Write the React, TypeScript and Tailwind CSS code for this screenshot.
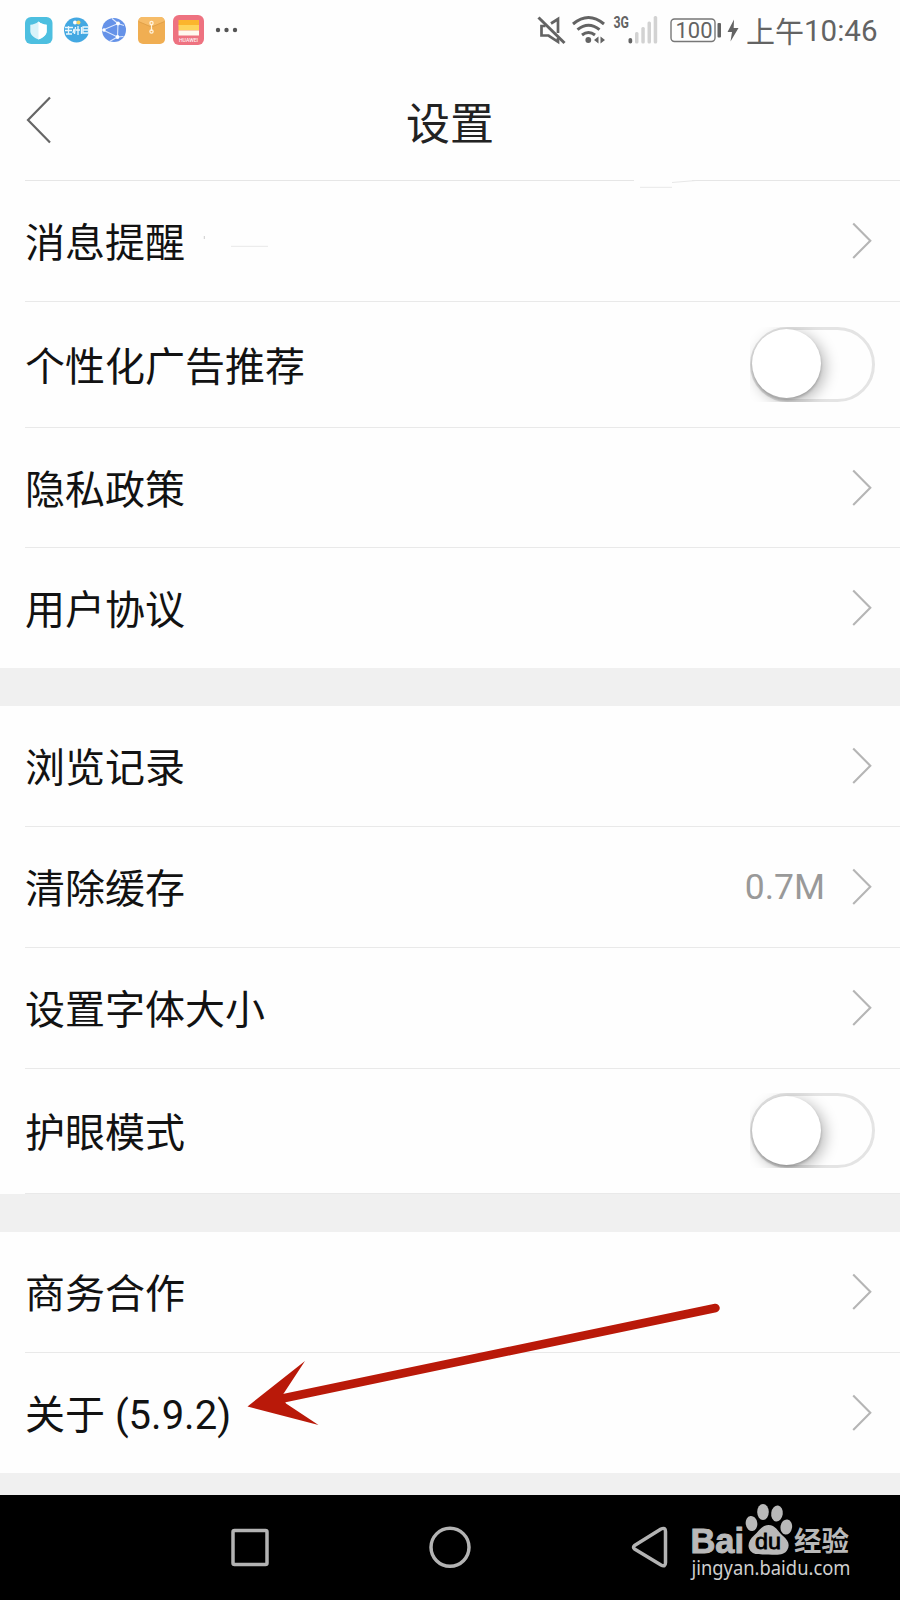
import type { ReactNode } from "react";

function Chevron() {
  return (
    <svg className="h-10 w-5 shrink-0" viewBox="0 0 20 40" fill="none" stroke="#b5b5b5" strokeWidth="2.100">
      <path d="M1.2 2.6 18.3 19.700 1.2 36.900" />
    </svg>
  );
}

function Toggle() {
  return (
    <div className="relative mb-[1px] h-[75px] w-[125px] overflow-hidden">
      <div className="h-[75px] w-[125px] rounded-full border-[3px] border-[#e4e4e4] bg-[#fefefe]" />
      <div className="absolute left-[2px] top-[2.500px] h-[69px] w-[69px] rounded-full bg-white shadow-[4px_4px_14px_1px_rgba(0,0,0,0.25),0_2px_3px_rgba(0,0,0,0.22)]" />
    </div>
  );
}

type RowProps = { label: string; value?: string; toggle?: boolean; size: string; line?: boolean };

function Row({ label, value, toggle, size, line = true }: RowProps) {
  return (
    <div className={`${size} pl-[25px]`}>
      <div className={`flex h-full items-center justify-between ${line ? "border-b border-[#e9e9e9]" : ""}`}>
        <span className="whitespace-pre pt-[6px] text-[40px] leading-[60px] text-[#121212]">{label}</span>
        {toggle ? (
          <div className="mr-[25px]"><Toggle /></div>
        ) : (
          <div className="mr-[28px] flex items-center gap-[27px]">
            {value && <span className="pt-[2px] text-[35.500px] leading-none text-[#999]">{value}</span>}
            <Chevron />
          </div>
        )}
      </div>
    </div>
  );
}

function Group({ children }: { children: ReactNode }) {
  return <section className="bg-[#fefefe]">{children}</section>;
}

function AppIcons() {
  return (
    <svg className="h-[60px] w-[260px]" viewBox="0 0 260 60">
      <rect x="25" y="17" width="27.5" height="27" rx="6" fill="#4dbfe0" />
      <path d="M38.500 21.500c2.500 2.200 5 3 8.200 3.200v6.500c0 3.700-3.500 6.400-8.200 8.300-4.700-1.900-8.200-4.600-8.200-8.300v-6.500c3.200-.2 5.700-1 8.200-3.200z" fill="#d9f3fa" />
      <path d="M38.500 21.500c2.500 2.200 5 3 8.200 3.200v6.500c0 3.700-3.500 6.400-8.200 8.300z" fill="#fff" />
      <circle cx="76.500" cy="30" r="12.500" fill="#43a8e2" />
      <circle cx="75" cy="22.500" r="2" fill="#fff" />
      <circle cx="78.500" cy="22.500" r="2" fill="#f3d465" />
      <path d="M65 27.500h8M65 30.500h7M66 34h6M68.500 26v8M74 29l-1 4M75.500 27l-1 7M78 26v9M76 30h4M81.500 27v7M83 27h5.500v6H83zM83 30h5.500" stroke="#eaf6fc" strokeWidth="1.300" fill="none" />
      <circle cx="114" cy="30" r="12" fill="#6592e8" />
      <path d="M103 30 118 23.500 117.500 37z M118 23.500 112 18.500M118 23.500l6 2M117.500 37l-8 4.500M117.500 37l6-.5" stroke="#dce8fd" strokeWidth="1.100" fill="none" />
      <circle cx="104" cy="30" r="1.700" fill="#fff" /><circle cx="118" cy="23.500" r="1.900" fill="#fff" /><circle cx="117.500" cy="37" r="1.900" fill="#fff" />
      <rect x="138" y="17" width="27" height="27" rx="5" fill="#f0ae52" />
      <path d="M138.500 21.500 151.500 27 164.500 21.500V20q-1-3-4-3h-18q-3 0-4 3z" fill="#f6bc68" />
      <path d="M138.500 21.500 151.500 27 164.500 21.500" stroke="#d99840" strokeWidth=".7" fill="none" />
      <path d="M151.500 24v7" stroke="#fff3de" strokeWidth="1.200" />
      <circle cx="151.500" cy="23" r="1.600" fill="none" stroke="#fff3de" strokeWidth="1.300" />
      <circle cx="151.500" cy="31.500" r="1.600" fill="none" stroke="#fff3de" strokeWidth="1.300" />
      <rect x="173" y="15" width="31" height="30" rx="6" fill="#ee7280" />
      <rect x="178.500" y="20" width="20.500" height="6" fill="#fbb52c" />
      <rect x="178.500" y="25" width="20.500" height="5.500" fill="#fdd45a" />
      <rect x="178.500" y="30.500" width="20.500" height="5" fill="#fff8ee" />
      <text x="188.500" y="41.800" textAnchor="middle" textLength="19" fontSize="5.200" fontWeight="500" fontFamily="Roboto, sans-serif" fill="#fdeef0">HUAWEI</text>
      <circle cx="218" cy="30" r="2.200" fill="#555" /><circle cx="226.500" cy="30" r="2.200" fill="#555" /><circle cx="235" cy="30" r="2.200" fill="#555" />
    </svg>
  );
}

function SystemIcons() {
  return (
    <svg className="h-[60px] w-[212px]" viewBox="530 0 212 60" fill="none">
      <g stroke="#636363" strokeWidth="3">
        <path d="M538.500 17.500 564.500 43" />
        <path d="M551 23.500 558 19V33M558 38v3.800L548.500 35.500h-7V26h4" strokeWidth="2.700" />
        <path d="M573 24q15.500-13 31 0" />
        <path d="M577.500 29.700q11-9 22 0" />
        <path d="M582 35q6.500-5 13 0" />
      </g>
      <circle cx="588.300" cy="40" r="2.900" fill="#636363" />
      <path d="M598.500 36.500v7l-4.500-3.500zM600.500 36.500v7l4.500-3.500z" fill="#636363" />
      <text x="613.500" y="28" fontSize="16.500" fontWeight="700" textLength="15.500" lengthAdjust="spacingAndGlyphs" fontFamily="Roboto, sans-serif" fill="#636363">3G</text>
      <rect x="628.500" y="38" width="3.700" height="5.500" rx="1.800" fill="#636363" />
      <g fill="#d2d2d2">
        <rect x="635" y="32" width="3.500" height="11.500" rx="1.500" />
        <rect x="641.300" y="27" width="3.500" height="16.500" rx="1.500" />
        <rect x="647.500" y="21.500" width="3.500" height="22" rx="1.500" />
        <rect x="653.700" y="16" width="3.500" height="27.500" rx="1.500" />
      </g>
      <rect x="671" y="19" width="44" height="22.500" rx="3.500" stroke="#777" strokeWidth="1.400" />
      <text x="675.500" y="38.300" fontSize="22.800" textLength="37" lengthAdjust="spacingAndGlyphs" fontFamily="Roboto, sans-serif" fill="#636363">100</text>
      <rect x="717.500" y="23" width="3.500" height="14.500" rx="1" fill="#636363" />
      <path d="M734 19.500 727.500 32h4.500l-1.500 9.500L738.500 28h-4.800z" fill="#636363" />
    </svg>
  );
}

function NavBar() {
  return (
    <nav className="flex h-[105px] bg-black">
      <svg className="h-[105px] w-[680px]" viewBox="0 1495 680 105" fill="none" stroke="#b3b3b3" strokeWidth="3.500">
        <rect x="233" y="1530.500" width="34" height="34" rx="1.500" />
        <circle cx="450" cy="1547.300" r="19" />
        <path d="M634.500 1545.500 661 1529q4.500-2 4.500 2.500v31q0 5-4.500 2.500L634.500 1549q-2-1.700 0-3.500z" strokeLinejoin="round" />
      </svg>
      <svg className="h-[105px] w-[220px]" viewBox="680 1495 220 105">
        <g fill="#b9b9b9">
          <text x="690.500" y="1552.500" fontSize="35" fontWeight="700" textLength="53.500" lengthAdjust="spacingAndGlyphs" fontFamily="'Liberation Sans', sans-serif" stroke="#b9b9b9" strokeWidth="1">Bai</text>
          <ellipse cx="751.500" cy="1523.500" rx="5.800" ry="7.600" transform="rotate(-8 751.500 1523.500)" />
          <ellipse cx="763" cy="1512" rx="5.800" ry="8" />
          <ellipse cx="777" cy="1513.500" rx="5.800" ry="8" transform="rotate(8 777 1513.500)" />
          <ellipse cx="786.300" cy="1527" rx="5.800" ry="7.600" transform="rotate(8 786.300 1527)" />
          <path d="M768.500 1525c7 0 9 6 14 10.500 6 5 7.500 9 5 14-3 6-10 5.500-19 5s-14 1-18-3.500c-4-5-1.500-11 3.500-15.500 5-4 7.500-10.500 14.500-10.500z" />
          <text x="794" y="1550.500" fontSize="27" fontWeight="700" textLength="55" lengthAdjust="spacingAndGlyphs" fontFamily="'Noto Sans CJK SC', sans-serif">经验</text>
          <text x="691.500" y="1574.800" fontSize="20" textLength="159" lengthAdjust="spacingAndGlyphs" fontFamily="'Noto Sans', sans-serif" fill="#cfcfcf">jingyan.baidu.com</text>
        </g>
        <text x="755" y="1549" fontSize="22" textLength="26" lengthAdjust="spacingAndGlyphs" fontFamily="'Liberation Sans', sans-serif" fill="#000" stroke="#000" strokeWidth=".8">du</text>
      </svg>
    </nav>
  );
}

export default function App() {
  return (
    <main className="relative h-[1600px] w-[900px] overflow-hidden bg-[#f0f0f0] font-['Roboto','Noto_Sans_CJK_SC',sans-serif]">
      <div className="flex h-[60px] items-start bg-[#fefefe]">
        <AppIcons />
        <div className="ml-auto flex">
          <SystemIcons />
          <div className="mr-[16px] ml-[4px] flex w-[138px] items-start whitespace-nowrap leading-[44px] text-[#636363]">
            <span className="mt-[11px] text-[29px]">上午</span>
            <span className="mt-[9px] text-[29.500px]">10:46</span>
          </div>
        </div>
      </div>
      <header className="h-[121px] bg-[#fefefe] pl-[25px]">
        <div className="grid h-full grid-cols-[1fr_auto_1fr] items-center border-b border-[#e6e6e6] pr-[25px]">
          <svg className="h-12 w-7" viewBox="25 95.5 28 48" fill="none" stroke="#666" strokeWidth="2.200"><path d="M50 97 28 119.500 50 142" /></svg>
          <h1 className="pt-[9px] text-[44px] leading-[64px] text-[#222]">设置</h1>
        </div>
      </header>
      <Group>
        <Row label="消息提醒" size="h-[121px]" />
        <Row label="个性化广告推荐" size="h-[126px]" toggle />
        <Row label="隐私政策" size="h-[120px]" />
        <Row label="用户协议" size="h-[120px]" line={false} />
      </Group>
      <div className="h-[38px]" />
      <Group>
        <Row label="浏览记录" size="h-[121px]" />
        <Row label="清除缓存" size="h-[121px]" value="0.7M" />
        <Row label="设置字体大小" size="h-[121px]" />
        <Row label="护眼模式" size="h-[125px]" toggle />
      </Group>
      <div className="h-[38px]" />
      <Group>
        <Row label="商务合作" size="h-[121px]" />
        <Row label="关于 (5.9.2)" size="h-[120px]" line={false} />
      </Group>
      <div className="h-[22px]" />
      <NavBar />
      <svg className="pointer-events-none absolute left-[200px] top-[170px] h-[90px] w-[520px]" viewBox="200 170 520 90" fill="none">
        <path d="M634 180.500H692" stroke="#fefefe" strokeWidth="2" />
        <path d="M640 187.300H672M672 182.500 696 180.500M231 246.300H268" stroke="#e8e8e8" />
        <path d="M204.300 236v3" stroke="#ccc" />
      </svg>
      <svg className="pointer-events-none absolute left-[240px] top-[1290px] h-[150px] w-[490px]" viewBox="240 1290 490 150">
        <path d="M280 1399 715.500 1308" stroke="#b91909" strokeWidth="8.500" strokeLinecap="round" />
        <path d="M247.500 1406.500 305 1361 282 1396 286 1403.500 318.500 1425z" fill="#b91909" />
      </svg>
    </main>
  );
}
